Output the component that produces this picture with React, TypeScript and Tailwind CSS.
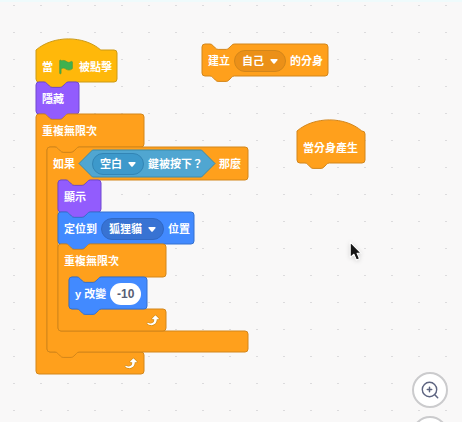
import type { ReactNode } from "react";

type Tone = "events" | "looks" | "control" | "motion";

const tones: Record<Tone, string> = {
  events: "fill-[#ffb80a] stroke-[#cc9a14]",
  looks: "fill-[#925cfd] stroke-[#7048cf]",
  control: "fill-[#ffa01c] stroke-[#d3861a]",
  motion: "fill-[#428aff] stroke-[#3471cf]",
};

// Connector outline, traced left to right (notch) and right to left (bump).
const NOTCH =
  "c1.35 0 2 .7 2.7 1.35 l2.7 2.7 c.7 .7 1.35 1.35 2.7 1.35 h8.1 c1.35 0 2 -.7 2.7 -1.35 l2.7 -2.7 c.7 -.7 1.35 -1.35 2.7 -1.35";
const BUMP =
  "c-1.35 0 -2 .7 -2.7 1.35 l-2.7 2.7 c-.7 .7 -1.35 1.35 -2.7 1.35 h-8.1 c-1.35 0 -2 -.7 -2.7 -1.35 l-2.7 -2.7 c-.7 -.7 -1.35 -1.35 -2.7 -1.35";
const NOTCH_X = 8;
const NOTCH_END = 32.3;
const ARM = 11;

const topEdge = (w: number) =>
  `M0 3 a3 3 0 0 1 3 -3 H${NOTCH_X} ${NOTCH} H${w - 3} a3 3 0 0 1 3 3`;

const hatEdge = (w: number) =>
  `M0 0 c17 -14.8 48 -14.8 64.8 0 H${w - 3} a3 3 0 0 1 3 3`;

const bottomEdge = (h: number, bump: boolean) =>
  `V${h - 3} a3 3 0 0 1 -3 3 ${bump ? `H${NOTCH_END} ${BUMP}` : ""} H3 a3 3 0 0 1 -3 -3 Z`;

const mouthEdge = (head: number, mouth: number, w: number) =>
  `V${head - 3} a3 3 0 0 1 -3 3 H${ARM + NOTCH_END} ${BUMP} H${ARM + 3} a3 3 0 0 0 -3 3 ` +
  `V${head + mouth - 3} a3 3 0 0 0 3 3 H${w - 3} a3 3 0 0 1 3 3`;

function Shape({ tone, w, h, d }: { tone: Tone; w: number; h: number; d: string }) {
  return (
    <svg aria-hidden="true" width={w} height={h} className="pointer-events-none absolute top-0 left-0 overflow-visible">
      <path d={d} strokeWidth="1" className={tones[tone]} />
    </svg>
  );
}

function Block({ tone, w, hat = false, children }: { tone: Tone; w: number; hat?: boolean; children: ReactNode }) {
  return (
    <div className="relative h-8">
      <Shape tone={tone} w={w} h={32} d={`${hat ? hatEdge(w) : topEdge(w)} ${bottomEdge(32, true)}`} />
      <div className="relative flex h-8 items-center gap-1 pt-px pl-1.5">{children}</div>
    </div>
  );
}

interface MouthProps {
  w: number;
  mouth: number;
  header: ReactNode;
  children: ReactNode;
}

function Forever({ w, mouth, header, children }: MouthProps) {
  const h = 33 + mouth + 22;
  return (
    <div className="relative">
      <Shape tone="control" w={w} h={h} d={`${topEdge(w)} ${mouthEdge(33, mouth, w)} ${bottomEdge(h, false)}`} />
      <div className="relative flex h-[33px] items-center gap-1 pl-1.5">{header}</div>
      <div className="ml-[11px]">{children}</div>
      <div className="relative flex h-[22px] items-center justify-end pr-1.5" style={{ width: w }}>
        <LoopArrow />
      </div>
    </div>
  );
}

function If({ w, mouth, header, children }: MouthProps) {
  const h = 33 + mouth + 21;
  return (
    <div className="relative">
      <Shape tone="control" w={w} h={h} d={`${topEdge(w)} ${mouthEdge(33, mouth, w)} ${bottomEdge(h, true)}`} />
      <div className="relative flex h-[33px] items-center gap-1 pl-1.5">{header}</div>
      <div className="ml-[11px]">{children}</div>
      <div className="h-[21px]" />
    </div>
  );
}

function LoopArrow() {
  return (
    <svg viewBox="0 0 24 24" className="size-4" aria-hidden="true">
      <path
        fill="#cf8b17"
        d="M23.3 11c-.3.6-.9 1-1.5 1h-1.6c-.1 1.3-.5 2.5-1.1 3.6-.9 1.7-2.3 3.2-4.1 4.1-1.7.9-3.6 1.2-5.5.9-1.8-.3-3.5-1.1-4.9-2.3-.7-.7-.7-1.9 0-2.6.6-.6 1.6-.7 2.3-.2H7c.9.6 1.9.9 2.9.9s1.9-.3 2.7-.9c1.1-.8 1.8-2.1 1.8-3.5h-1.5c-.9 0-1.7-.7-1.7-1.7 0-.4.2-.9.5-1.2l4.4-4.4c.7-.6 1.7-.6 2.4 0L23 9.2c.5.5.6 1.2.3 1.8z"
      />
      <path
        fill="#fff"
        d="M21.8 11h-2.6c0 1.5-.3 2.9-1 4.2-.8 1.6-2.1 2.8-3.7 3.6-1.5.8-3.3 1.1-4.9.8-1.6-.2-3.2-1-4.4-2.1-.4-.3-.4-.9-.1-1.2.3-.4.9-.4 1.2-.1 1 .7 2.2 1.1 3.4 1.1s2.3-.3 3.3-1c.9-.6 1.6-1.5 2-2.6.3-.9.4-1.8.2-2.8h-2.4c-.4 0-.7-.3-.7-.7 0-.2.1-.3.2-.4l4.4-4.4c.3-.3.7-.3.9 0L22 9.8c.3.3.4.6.3.9s-.3.3-.5.3z"
      />
    </svg>
  );
}

function Flag() {
  return (
    <svg viewBox="0 0 24 24" className="mx-px size-4" aria-hidden="true">
      <path
        fill="#3fb14f"
        stroke="#4a9a3c"
        strokeWidth="1"
        d="M20.8 3.7c-.4-.2-.9-.1-1.2.2-2 1.6-4.8 1.6-6.8 0-2.3-1.9-5.6-2.3-8.3-1v-.4c0-.6-.5-1-1-1s-1 .4-1 1v18.8c0 .5.5 1 1 1h.1c.5 0 1-.5 1-1v-6.4c1-.7 2.1-1.2 3.4-1.3 1.2 0 2.4.4 3.4 1.2 2.9 2.3 7 2.3 9.8 0 .3-.2.4-.5.4-.9V4.7c0-.5-.3-.9-.8-1z"
      />
    </svg>
  );
}

function Pill({ label, value, className }: { label: string; value: string; className: string }) {
  return (
    <span className="relative flex">
      <select
        aria-label={label}
        defaultValue={value}
        className={`h-[22px] appearance-none rounded-full border pr-[21px] pl-[7px] leading-5 outline-none ${className}`}
      >
        <option>{value}</option>
      </select>
      <svg viewBox="0 0 8 5" className="pointer-events-none absolute top-[9px] right-2 h-[5px] w-2" aria-hidden="true">
        <path d="M1 0h6q1 .3 .6 1L4.7 4.4q-.7 .6 -1.4 0L.4 1Q0 .3 1 0z" fill="#fff" />
      </svg>
    </span>
  );
}

function KeyPressed() {
  return (
    <div className="relative flex h-[27px] w-[136px] items-center gap-1 pl-[13px]">
      <svg aria-hidden="true" width="136" height="27" className="absolute top-0 left-0 overflow-visible">
        <path d="M0 13.5 L13.5 0 H122.5 L136 13.5 L122.5 27 H13.5 Z" className="fill-[#50a6d1] stroke-[#3a8cae]" />
      </svg>
      <Pill label="按鍵" value="空白" className="border-[#3285b5] bg-[#3d99cb]" />
      <span className="relative whitespace-nowrap">鍵被按下？</span>
    </div>
  );
}

function ZoomButton({ label, plus }: { label: string; plus: boolean }) {
  return (
    <button
      aria-label={label}
      className="flex size-9 items-center justify-center rounded-full border-2 border-[#cbcbcd] bg-white"
    >
      <svg viewBox="0 0 18 18" fill="none" stroke="#5d6480" strokeLinecap="round" className="size-[18px]">
        <circle cx="8.500" cy="8.500" r="7.200" strokeWidth="1.400" />
        <path d={plus ? "M6.300 8.500h4.400M8.500 6.300v4.400" : "M6.300 8.500h4.400"} strokeWidth="1.500" />
        <path d="M13.800 13.800l2.900 2.900" strokeWidth="1.500" />
      </svg>
    </button>
  );
}

function Grid() {
  return (
    <svg aria-hidden="true" className="absolute inset-0 size-full">
      <defs>
        <pattern id="dots" width="27" height="27" patternUnits="userSpaceOnUse">
          <rect x="13" y="5" width="2" height="1" fill="#dcdbdd" />
        </pattern>
      </defs>
      <rect width="100%" height="100%" fill="url(#dots)" />
    </svg>
  );
}

export default function App() {
  return (
    <main className="relative h-screen w-full overflow-hidden border-t-2 border-[#effbfc] bg-[#f9f8f8] font-['Liberation_Sans','Noto_Sans_CJK_TC',sans-serif] text-[11px] leading-4 font-bold text-white">
      <div className="absolute inset-x-0 -top-0.5 bottom-0">
        <Grid />

        <section className="absolute top-[50px] left-9 whitespace-nowrap">
          <Block tone="events" w={81} hat>
            <span>當</span>
            <Flag />
            <span>被點擊</span>
          </Block>
          <Block tone="looks" w={43}>
            <span>隱藏</span>
          </Block>
          <Forever w={108} mouth={205} header={<span>重複無限次</span>}>
            <If
              w={201}
              mouth={151}
              header={
                <>
                  <span>如果</span>
                  <KeyPressed />
                  <span>那麼</span>
                </>
              }
            >
              <Block tone="looks" w={43}>
                <span>顯示</span>
              </Block>
              <Block tone="motion" w={136}>
                <span>定位到</span>
                <Pill label="目標" value="狐狸貓" className="border-[#3068c4] bg-[#3873d3]" />
                <span>位置</span>
              </Block>
              <Forever w={108} mouth={32} header={<span>重複無限次</span>}>
                <Block tone="motion" w={78}>
                  <label htmlFor="dy">y 改變</label>
                  <input
                    id="dy"
                    defaultValue="-10"
                    className="h-[22px] w-[31px] rounded-full bg-white text-center text-xs text-[#575e75] outline-none"
                  />
                </Block>
              </Forever>
            </If>
          </Forever>
        </section>

        <section className="absolute top-11 left-[202px] whitespace-nowrap">
          <Block tone="control" w={126}>
            <span>建立</span>
            <Pill label="分身對象" value="自己" className="border-[#d3861a] bg-[#eb9018]" />
            <span>的分身</span>
          </Block>
        </section>

        <section className="absolute top-[131px] left-[297px] whitespace-nowrap">
          <Block tone="control" w={68} hat>
            <span>當分身產生</span>
          </Block>
        </section>

        <svg
          aria-hidden="true"
          viewBox="0 0 12 19"
          className="absolute top-[241px] left-[349px] h-5 w-[13px] drop-shadow-sm"
        >
          <path
            d="M1 1V15.500L4.500 12.600L6.900 18L9.800 16.800L7.500 11.700H11.500Z"
            fill="#161616"
            stroke="#fff"
            strokeWidth="1"
            strokeLinejoin="round"
          />
        </svg>

        <div className="absolute top-[372px] right-3.5 flex flex-col gap-2">
          <ZoomButton label="放大" plus />
          <ZoomButton label="縮小" plus={false} />
        </div>
      </div>
    </main>
  );
}
